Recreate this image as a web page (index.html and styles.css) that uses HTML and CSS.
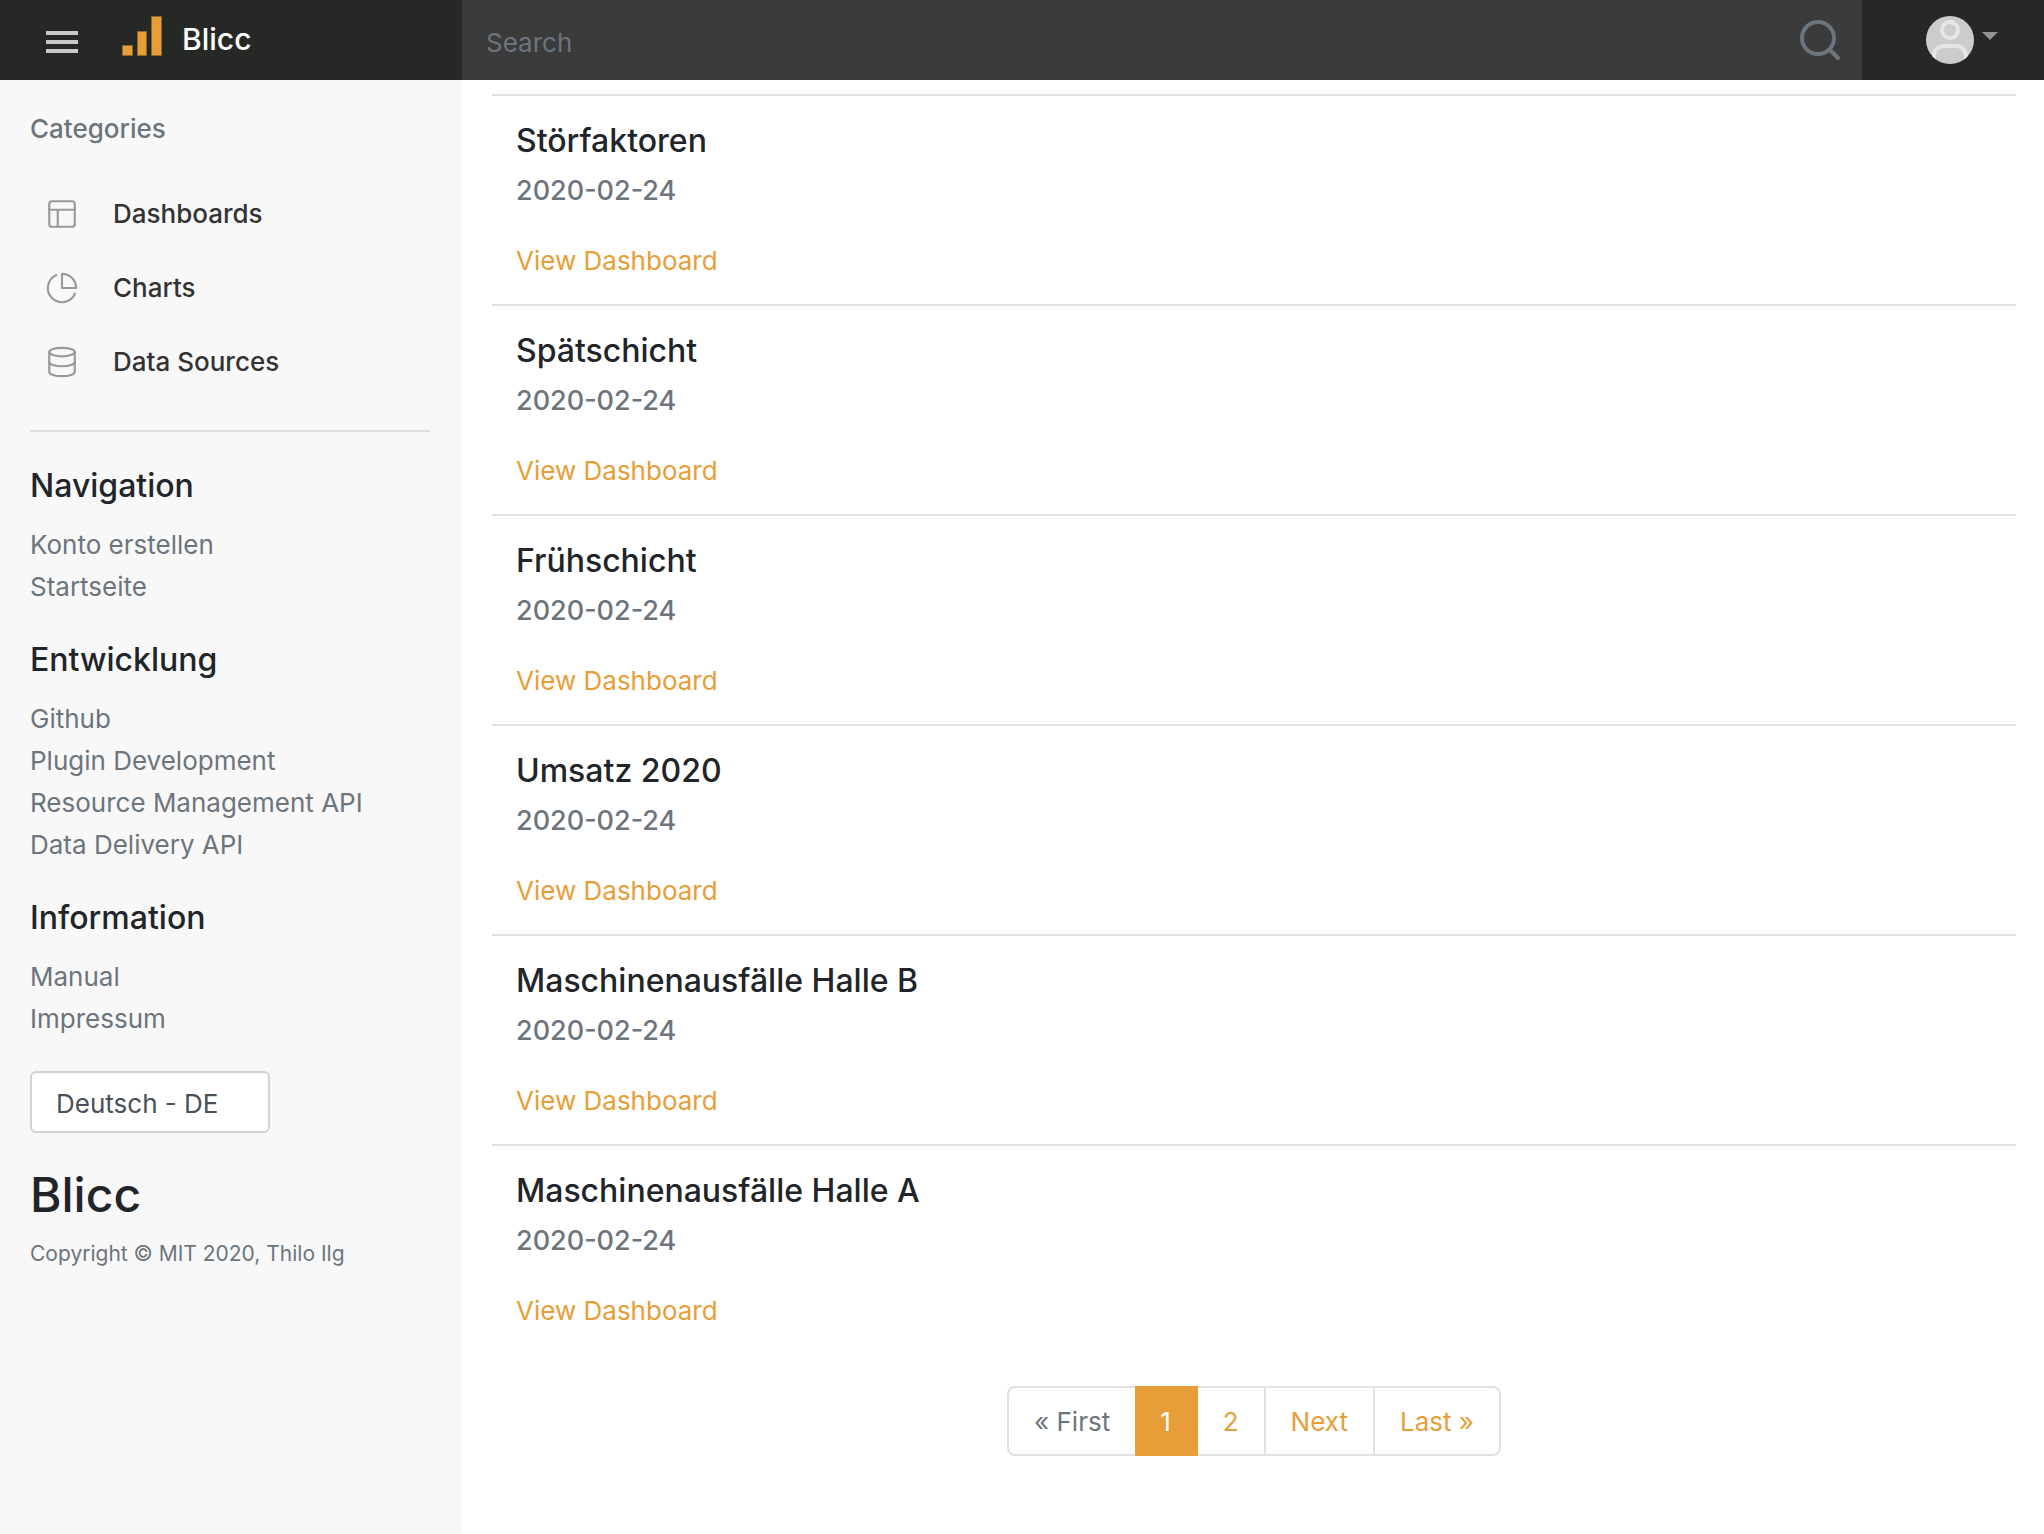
FILE: index.html
```html
<!DOCTYPE html>
<html lang="de">
<head>
<meta charset="utf-8">
<meta name="viewport" content="width=device-width, initial-scale=1">
<title>Blicc</title>
<link rel="stylesheet" href="styles.css">
</head>
<body>
<header class="topbar">
  <div class="brand-area">
    <button class="menu-toggle" type="button" aria-label="Menu">
      <svg width="32" height="22" viewBox="0 0 32 22" fill="#c8c9c8" aria-hidden="true"><path d="M0 0h32v4H0zM0 9h32v4H0zM0 18h32v4H0z"/></svg>
    </button>
    <a class="brand" href="#">
      <svg width="40" height="40" viewBox="0 0 40 40" fill="#e79e38" stroke="#8f662b" aria-hidden="true"><path d="M.5 29.500h10v10H.5zM15.500 15.500h9v24h-9zM29.500 .5h10v39h-10z"/></svg>
      <span class="brand-name">Blicc</span>
    </a>
  </div>
  <form class="search">
    <input class="search-input" type="text" placeholder="Search" aria-label="Search">
    <button class="search-button" type="submit" aria-label="Start search">
      <svg width="40" height="40" viewBox="0 0 40 40" fill="none" stroke="#6c757d" stroke-width="4" stroke-linecap="round" aria-hidden="true"><circle cx="18" cy="18" r="16"/><path d="M30 30l8 8"/></svg>
    </button>
  </form>
  <button class="account" type="button" aria-label="Account">
    <svg class="avatar" width="48" height="48" viewBox="0 0 48 48" fill="none" stroke="#e6e6e6" stroke-width="4" aria-hidden="true"><circle cx="24" cy="14" r="8"/><path d="M8 48v-8a10 10 0 0 1 10-10h12a10 10 0 0 1 10 10v8"/></svg>
    <svg class="caret" width="16" height="8" viewBox="0 0 16 8" fill="#929392" aria-hidden="true"><path d="M0 0h16L8 8z"/></svg>
  </button>
</header>
<div class="layout">
  <aside class="sidebar">
    <h2 class="sidebar-label">Categories</h2>
    <nav class="categories">
      <a class="category" href="#"><svg class="icon" viewBox="0 0 24 24" aria-hidden="true"><rect x="3" y="3" width="18" height="18" rx="2"/><path d="M3 9h18M9 21V9"/></svg>Dashboards</a>
      <a class="category" href="#"><svg class="icon" viewBox="0 0 24 24" aria-hidden="true"><path d="M21.210 15.890A10 10 0 1 1 8 2.830"/><path d="M22 12A10 10 0 0 0 12 2v10z"/></svg>Charts</a>
      <a class="category" href="#"><svg class="icon" viewBox="0 0 24 24" aria-hidden="true"><ellipse cx="12" cy="5" rx="9" ry="3"/><path d="M21 12c0 1.660-4 3-9 3s-9-1.340-9-3"/><path d="M3 5v14c0 1.660 4 3 9 3s9-1.340 9-3V5"/></svg>Data Sources</a>
    </nav>
    <hr class="divider">
    <nav class="link-group">
      <h3 class="heading">Navigation</h3>
      <a href="#">Konto erstellen</a>
      <a href="#">Startseite</a>
    </nav>
    <nav class="link-group">
      <h3 class="heading">Entwicklung</h3>
      <a href="#">Github</a>
      <a href="#">Plugin Development</a>
      <a href="#">Resource Management API</a>
      <a href="#">Data Delivery API</a>
    </nav>
    <nav class="link-group">
      <h3 class="heading">Information</h3>
      <a href="#">Manual</a>
      <a href="#">Impressum</a>
    </nav>
    <select class="language" aria-label="Sprache">
      <option>Deutsch - DE</option>
    </select>
    <p class="product">Blicc</p>
    <p class="copyright">Copyright © MIT 2020, Thilo Ilg</p>
  </aside>
  <main class="content">
    <ul class="dashboards">
      <li class="dashboard"><h3 class="heading">Störfaktoren</h3><time class="date">2020-02-24</time><a class="view" href="#">View Dashboard</a></li>
      <li class="dashboard"><h3 class="heading">Spätschicht</h3><time class="date">2020-02-24</time><a class="view" href="#">View Dashboard</a></li>
      <li class="dashboard"><h3 class="heading">Frühschicht</h3><time class="date">2020-02-24</time><a class="view" href="#">View Dashboard</a></li>
      <li class="dashboard"><h3 class="heading">Umsatz 2020</h3><time class="date">2020-02-24</time><a class="view" href="#">View Dashboard</a></li>
      <li class="dashboard"><h3 class="heading">Maschinenausfälle Halle B</h3><time class="date">2020-02-24</time><a class="view" href="#">View Dashboard</a></li>
      <li class="dashboard"><h3 class="heading">Maschinenausfälle Halle A</h3><time class="date">2020-02-24</time><a class="view" href="#">View Dashboard</a></li>
    </ul>
    <nav class="pagination" aria-label="Pages">
      <span class="page disabled">« First</span>
      <a class="page active" href="#" aria-current="page">1</a>
      <a class="page" href="#">2</a>
      <a class="page" href="#">Next</a>
      <a class="page" href="#">Last »</a>
    </nav>
  </main>
</div>
</body>
</html>
```
FILE: styles.css
```css
* {
  box-sizing: border-box;
}

body {
  margin: 0;
  display: flex;
  flex-direction: column;
  min-height: 100vh;
  font: 400 26px/42px Inter, "Liberation Sans", sans-serif;
  color: #212529;
  background: #fff;
}

a {
  color: inherit;
  text-decoration: none;
}

button,
input,
select {
  font: inherit;
  margin: 0;
}

button {
  padding: 0;
  border: 0;
  background: none;
  cursor: pointer;
}

svg {
  display: block;
}

h2,
h3,
p,
ul {
  margin: 0;
  padding: 0;
}

.topbar {
  display: flex;
  height: 80px;
  background: #262825;
}

.brand-area {
  display: flex;
  align-items: center;
  gap: 44px;
  width: 462px;
  padding-left: 46px;
}

.menu-toggle {
  padding-top: 4px;
}

.brand {
  display: flex;
  align-items: flex-end;
  gap: 20px;
  padding-bottom: 8px;
  color: #fff;
}

.brand-name {
  font-size: 30px;
  font-weight: 500;
  line-height: 34px;
}

.search {
  display: flex;
  align-items: center;
  flex: 1;
  padding: 0 22px 0 24px;
  background: #3b3b3b;
}

.search-input {
  flex: 1;
  min-width: 0;
  padding: 6px 0 0;
  border: 0;
  outline: 0;
  background: none;
  color: #fff;
}

.search-input::placeholder {
  color: #6c757d;
  opacity: 1;
}

.account {
  display: flex;
  align-items: center;
  justify-content: center;
  gap: 8px;
  width: 182px;
  padding-left: 18px;
}

.avatar {
  border-radius: 50%;
  background: #ccc;
}

.caret {
  margin-bottom: 8px;
}

.layout {
  display: flex;
  flex: 1;
}

.sidebar {
  flex: none;
  width: 462px;
  padding: 28px 32px 28px 30px;
  background: #f8f8f8;
  color: #6c757d;
}

.sidebar-label {
  font-size: 26px;
  font-weight: 500;
}

.categories {
  margin-top: 27px;
}

.category {
  display: flex;
  align-items: center;
  gap: 34px;
  height: 74px;
  padding-left: 15px;
  font-weight: 500;
  color: #333;
}

.icon {
  width: 34px;
  height: 34px;
  fill: none;
  stroke: #999;
  stroke-width: 1.5;
  stroke-linecap: round;
  stroke-linejoin: round;
}

.divider {
  margin: 31px 0 33px;
  border: 0;
  border-top: 2px solid #dedede;
}

.link-group {
  display: flex;
  flex-direction: column;
  margin-bottom: 31px;
}

.heading {
  font-size: 32px;
  font-weight: 500;
  color: #212529;
}

.link-group .heading {
  margin-bottom: 17px;
}

.language {
  display: block;
  appearance: none;
  width: 240px;
  height: 62px;
  padding: 3px 24px 0;
  border: 2px solid #ced4da;
  border-radius: 6px;
  background: #fff;
  color: #495057;
}

.product {
  margin-top: 32px;
  font-size: 48px;
  font-weight: 500;
  line-height: 60px;
  color: #212529;
}

.copyright {
  margin-top: 12px;
  font-size: 21px;
  line-height: 34px;
}

.content {
  flex: 1;
  min-width: 0;
  padding: 14px 28px 78px 30px;
}

.dashboards {
  list-style: none;
}

.dashboard {
  display: flex;
  flex-direction: column;
  align-items: flex-start;
  padding: 24px 24px 22px;
  border-top: 2px solid #dee2e6;
}

.date {
  margin: 12px 0 32px;
  font-size: 27px;
  font-weight: 500;
  line-height: 34px;
  color: #6c757d;
}

.view {
  color: #e79e38;
}

.pagination {
  display: flex;
  justify-content: center;
  margin-top: 32px;
}

.page {
  padding: 13px 25px 11px;
  border: 2px solid #dee2e6;
  border-left-width: 0;
  color: #e79e38;
}

.page:first-child {
  border-left-width: 2px;
  border-right-width: 0;
  border-radius: 8px 0 0 8px;
}

.page:last-child {
  border-radius: 0 8px 8px 0;
}

.page.disabled {
  color: #6c757d;
}

.page.active {
  border-color: #e79e38;
  background: #e79e38;
  color: #fff;
}
```
